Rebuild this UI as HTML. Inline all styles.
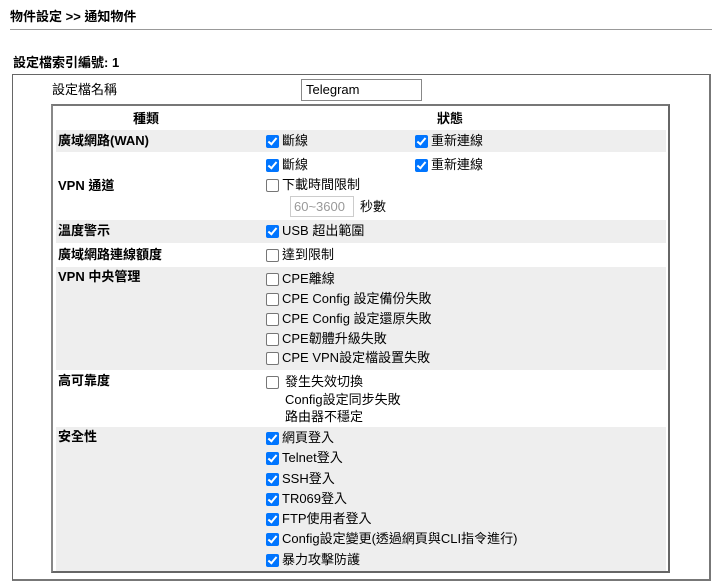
<!DOCTYPE html>
<html><head><meta charset="utf-8"><style>
*{margin:0;padding:0;box-sizing:border-box}
body{width:721px;height:588px;background:#fff;position:relative;overflow:hidden;font-family:"Liberation Sans","Noto Sans CJK TC",sans-serif;font-size:13px;color:#000}
.a{position:absolute;white-space:nowrap;line-height:16px}
.b{font-weight:bold}
.g{position:absolute;left:56px;width:610px;background:#eeeeee}
.cb{position:absolute;width:13px;height:13px;border-radius:2px}
.on{background:#0075ff}
.on:after{content:"";position:absolute;left:4px;top:1px;width:3px;height:7px;border:solid #fff;border-width:0 2px 2px 0;transform:rotate(40deg)}
.off{border:1px solid #767676;background:#fff}
</style></head><body>
<div class="a b" style="left:10px;top:9px">物件設定 &gt;&gt; 通知物件</div>
<div style="position:absolute;left:10px;top:29px;width:702px;height:1px;background:#999"></div>
<div class="a b" style="left:13px;top:55px">設定檔索引編號: 1</div>
<div style="position:absolute;left:12px;top:74px;width:699px;height:507px;border:1px solid #666;border-right:2px solid #777;border-bottom:2px solid #777"></div>
<div class="a" style="left:52px;top:82px">設定檔名稱</div>
<div class="a" style="left:301px;top:79px;width:121px;height:22px;border:1px solid #888;padding:3px 4px;line-height:14px">Telegram</div>
<div style="position:absolute;left:51px;top:104px;width:619px;height:469px;border:2px solid #666;border-top-color:#777;border-left-color:#888"></div>
<div class="g" style="top:130px;height:22px"></div>
<div class="g" style="top:220px;height:23px"></div>
<div class="g" style="top:267px;height:103px"></div>
<div class="g" style="top:427px;height:144px"></div>
<div class="a b" style="left:133px;top:111px">種類</div>
<div class="a b" style="left:437px;top:111px">狀態</div>
<div class="a b" style="left:58px;top:133px">廣域網路(WAN)</div>
<div class="a b" style="left:58px;top:178px">VPN 通道</div>
<div class="a b" style="left:58px;top:223px">溫度警示</div>
<div class="a b" style="left:58px;top:247px">廣域網路連線額度</div>
<div class="a b" style="left:58px;top:269px">VPN 中央管理</div>
<div class="a b" style="left:58px;top:373px">高可靠度</div>
<div class="a b" style="left:58px;top:429px">安全性</div>

<div class="cb on" style="left:266px;top:135px"></div><div class="a" style="left:282px;top:133px">斷線</div>
<div class="cb on" style="left:415px;top:135px"></div><div class="a" style="left:431px;top:133px">重新連線</div>
<div class="cb on" style="left:266px;top:159px"></div><div class="a" style="left:282px;top:157px">斷線</div>
<div class="cb on" style="left:415px;top:159px"></div><div class="a" style="left:431px;top:157px">重新連線</div>
<div class="cb off" style="left:266px;top:179px"></div><div class="a" style="left:282px;top:177px">下載時間限制</div>
<div class="a" style="left:290px;top:196px;width:64px;height:21px;border:1px solid #ccc;color:#999;padding:2px 3px;line-height:15px">60~3600</div>
<div class="a" style="left:360px;top:199px">秒數</div>
<div class="cb on" style="left:266px;top:225px"></div><div class="a" style="left:282px;top:223px">USB 超出範圍</div>
<div class="cb off" style="left:266px;top:249px"></div><div class="a" style="left:282px;top:247px">達到限制</div>

<div class="cb off" style="left:266px;top:273px"></div><div class="a" style="left:282px;top:271px">CPE離線</div>
<div class="cb off" style="left:266px;top:293px"></div><div class="a" style="left:282px;top:291px">CPE Config 設定備份失敗</div>
<div class="cb off" style="left:266px;top:313px"></div><div class="a" style="left:282px;top:311px">CPE Config 設定還原失敗</div>
<div class="cb off" style="left:266px;top:333px"></div><div class="a" style="left:282px;top:331px">CPE韌體升級失敗</div>
<div class="cb off" style="left:266px;top:352px"></div><div class="a" style="left:282px;top:350px">CPE VPN設定檔設置失敗</div>

<div class="cb off" style="left:266px;top:376px"></div><div class="a" style="left:285px;top:374px">發生失效切換</div>
<div class="a" style="left:285px;top:392px">Config設定同步失敗</div>
<div class="a" style="left:285px;top:409px">路由器不穩定</div>

<div class="cb on" style="left:266px;top:432px"></div><div class="a" style="left:282px;top:430px">網頁登入</div>
<div class="cb on" style="left:266px;top:452px"></div><div class="a" style="left:282px;top:450px">Telnet登入</div>
<div class="cb on" style="left:266px;top:473px"></div><div class="a" style="left:282px;top:471px">SSH登入</div>
<div class="cb on" style="left:266px;top:493px"></div><div class="a" style="left:282px;top:491px">TR069登入</div>
<div class="cb on" style="left:266px;top:513px"></div><div class="a" style="left:282px;top:511px">FTP使用者登入</div>
<div class="cb on" style="left:266px;top:533px"></div><div class="a" style="left:282px;top:531px">Config設定變更(透過網頁與CLI指令進行)</div>
<div class="cb on" style="left:266px;top:554px"></div><div class="a" style="left:282px;top:552px">暴力攻擊防護</div>
</body></html>
